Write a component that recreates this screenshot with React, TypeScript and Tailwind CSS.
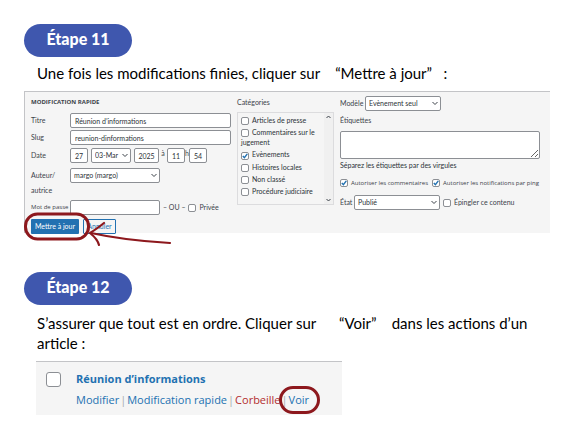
import type { ReactNode } from "react";

const FIELD = "block h-[15px] rounded-[2px] border border-[#8c8f94] bg-white text-[7px] text-[#2c3338]";
const COMPACT = "font-['Open_Sans','Noto_Sans',sans-serif] text-[6px]";

function Badge({ children }: { children: ReactNode }) {
  return (
    <h2 className="flex h-[33px] w-[108px] items-center justify-center rounded-full bg-[#3f57ae] pb-1 font-['Lato',sans-serif] text-[16px] font-black leading-[24px] text-white">
      {children}
    </h2>
  );
}

function Select({ id, value, className, label }: { id?: string; value: string; className: string; label?: string }) {
  return (
    <span className={`relative block ${className}`}>
      <select id={id} aria-label={label} defaultValue={value} className={`${FIELD} w-full appearance-none pl-[3px]`}>
        <option>{value}</option>
      </select>
      <svg className="pointer-events-none absolute right-[3px] top-[5px] h-[5px] w-[6px]" viewBox="0 0 6 5" fill="none" stroke="#3c434a">
        <path d="M.5 1 3 3.5 5.5 1" />
      </svg>
    </span>
  );
}

function Check({ label, checked }: { label: string; checked?: boolean }) {
  return (
    <label>
      <span className="relative mr-[3px] inline-block size-[8px] align-middle">
        <input type="checkbox" defaultChecked={checked} className="peer block size-[8px] appearance-none rounded-[2px] border border-[#8c8f94] bg-white" />
        <svg className="pointer-events-none absolute inset-0 hidden size-[8px] peer-checked:block" viewBox="0 0 8 8" fill="none" stroke="#2271b1" strokeWidth="1.4">
          <path d="M1.8 4 3.4 5.7 6.3 1.8" />
        </svg>
      </span>
      {label}
    </label>
  );
}

function QuickEdit() {
  return (
    <form className="relative mr-[29px] grid h-[142px] grid-cols-[200px_97px_minmax(0,1fr)] gap-x-[6px] border-l border-t border-[#c3c4c7] bg-[#f5f5f5] pl-[6px] pr-[10px] pt-[4px] font-['Lato',sans-serif] text-[7px] leading-[13px] text-[#3c434a]">
      <div>
        <h3 className={`mb-[4px] font-bold ${COMPACT}`}>MODIFICATION RAPIDE</h3>
        <div className="grid grid-cols-[39px_1fr] items-center gap-y-[2px]">
          <label htmlFor="titre">Titre</label>
          <input id="titre" defaultValue="Réunion d’informations" className={`${FIELD} w-full px-1`} />
          <label htmlFor="slug">Slug</label>
          <input id="slug" defaultValue="reunion-dinformations" className={`${FIELD} w-full px-1`} />
          <label htmlFor="jour">Date</label>
          <div className="flex items-center">
            <input id="jour" defaultValue="27" className={`${FIELD} mr-[3px] w-[18px] text-center`} />
            <Select label="Mois" value="03-Mar" className="mr-[3px] w-[40px]" />
            <input aria-label="Année" defaultValue="2025" className={`${FIELD} w-[25px] text-center`} />
            <span className="w-[8px] pb-1 text-center">à</span>
            <input aria-label="Heure" defaultValue="11" className={`${FIELD} w-[18px] text-center`} />
            <span className="w-[4px] pb-1">h</span>
            <input aria-label="Minute" defaultValue="54" className={`${FIELD} w-[18px] text-center`} />
          </div>
        </div>
        <div className="mt-[4px] flex items-start">
          <label htmlFor="auteur" className="w-[39px] leading-[15px]">Auteur/<br />autrice</label>
          <Select id="auteur" value="margo (margo)" className="w-[90px]" />
        </div>
        <div className="mt-[2px] flex items-center whitespace-nowrap">
          <label htmlFor="passe" className={`w-[39px] ${COMPACT}`}>Mot de passe</label>
          <input id="passe" className={`${FIELD} w-[90px]`} />
          <span className="mx-[3px]">– OU –</span>
          <Check label="Privée" />
        </div>
        <div className="mt-[4px] flex gap-[4px]">
          <button type="button" className="h-[15px] w-[48px] rounded-[1px] bg-[#2271b1] text-white">Mettre à jour</button>
          <button type="button" className="h-[15px] w-[33px] rounded-[1px] border border-[#2271b1] text-[#2271b1]">Annuler</button>
        </div>
      </div>

      <fieldset>
        <legend className="mb-[3px]">Catégories</legend>
        <div className="flex h-[93px] border border-[#dcdcde] text-[#2c3338]">
          <div className="flex flex-1 flex-col gap-[2px] pl-[3px] pt-[2px] leading-[10px]">
            <Check label="Articles de presse" />
            <Check label="Commentaires sur le jugement" />
            <Check label="Evènements" checked />
            <Check label="Histoires locales" />
            <Check label="Non classé" />
            <Check label="Procédure judiciaire" />
          </div>
          <div className="flex w-[9px] flex-col items-center justify-between bg-[#f0f0f0] py-[2px]">
            <svg className="h-[4px] w-[5px]" viewBox="0 0 5 4" fill="none" stroke="#3c434a"><path d="m.5 3 2-2 2 2" /></svg>
            <svg className="h-[4px] w-[5px]" viewBox="0 0 5 4" fill="none" stroke="#3c434a"><path d="m.5 1 2 2 2-2" /></svg>
          </div>
        </div>
      </fieldset>

      <div>
        <div className="flex items-center">
          <label htmlFor="modele" className="w-[25px]">Modèle</label>
          <Select id="modele" value="Evènement seul" className="w-[76px]" />
        </div>
        <label htmlFor="etiquettes" className="mb-[4px] mt-[3px] block">Étiquettes</label>
        <textarea id="etiquettes" className="block h-[28px] w-full resize rounded-[2px] border border-[#8c8f94] bg-white" />
        <p className="text-[#2c3338]">Séparez les étiquettes par des virgules</p>
        <div className={`mt-[5px] flex gap-[4px] whitespace-nowrap ${COMPACT}`}>
          <Check label="Autoriser les commentaires" checked />
          <Check label="Autoriser les notifications par ping" checked />
        </div>
        <div className="mt-[5px] flex items-center">
          <label htmlFor="etat" className="w-[14px]">État</label>
          <Select id="etat" value="Publié" className="mr-[3px] w-[86px]" />
          <Check label="Épingler ce contenu" />
        </div>
      </div>

      <svg className="pointer-events-none absolute -left-[1px] top-[119px] h-[36px] w-[150px]" viewBox="0 0 150 36" fill="none" stroke="#8d181d" strokeWidth="3">
        <rect x="1.5" y="3" width="63" height="25" rx="12" />
        <path d="M67 22C85 26 111 30 146 32" strokeWidth="2.2" strokeLinecap="round" />
        <path d="M80 12C75 16 71 19 66 22C71 26 74 30 75 34" strokeWidth="2.2" strokeLinecap="round" strokeLinejoin="round" />
      </svg>
    </form>
  );
}

function ArticleRow() {
  return (
    <div className="flex h-[54px] w-[306px] items-start gap-[15px] border-t border-[#c3c4c7] bg-[#f5f5f5] pl-[10px] pt-[9px] font-['Open_Sans','Noto_Sans',sans-serif] text-[11px] leading-[16px]">
      <input type="checkbox" aria-label="Sélectionner Réunion d’informations" className="mt-[1px] size-[15px] shrink-0 appearance-none rounded-[3px] border border-[#8c8f94] bg-white" />
      <div className="whitespace-nowrap text-[#a7aaad]">
        <a href="#article" className="mb-[5px] block font-bold text-[#2271b1]">Réunion d’informations</a>
        <div className="flex gap-[1px]">
          <a href="#modifier" className="text-[#2271b1]">Modifier</a>
          <span>|</span>
          <a href="#rapide" className="text-[#2271b1]">Modification rapide</a>
          <span>|</span>
          <a href="#corbeille" className="text-[#b32d2e]">Corbeille</a>
          <span>|</span>
          <span className="relative">
            <a href="#voir" className="text-[#2271b1]">Voir</a>
            <span className="pointer-events-none absolute -inset-y-[6px] -left-[10px] -right-[11px] rounded-full border-3 border-[#8d181d]" />
          </span>
        </div>
      </div>
    </div>
  );
}

export default function App() {
  return (
    <main className="bg-white py-[24px] pl-[24px]">
      <section>
        <Badge>Étape 11</Badge>
        <p className="whitespace-pre-wrap pb-[8px] pl-[13px] pt-[6px] font-['Lato',sans-serif] text-[15px] leading-[20px] text-black">
          Une fois les modifications finies, cliquer sur    “Mettre à jour”   :
        </p>
        <QuickEdit />
      </section>
      <section className="mt-[39px]">
        <Badge>Étape 12</Badge>
        <p className="mr-[40px] whitespace-pre-wrap pb-[8px] pl-[13px] pt-[8px] font-['Lato',sans-serif] text-[15px] leading-[20px] text-black">
          S’assurer que tout est en ordre. Cliquer sur      “Voir”    dans les actions d’un article :
        </p>
        <div className="pl-[12px]">
          <ArticleRow />
        </div>
      </section>
    </main>
  );
}
